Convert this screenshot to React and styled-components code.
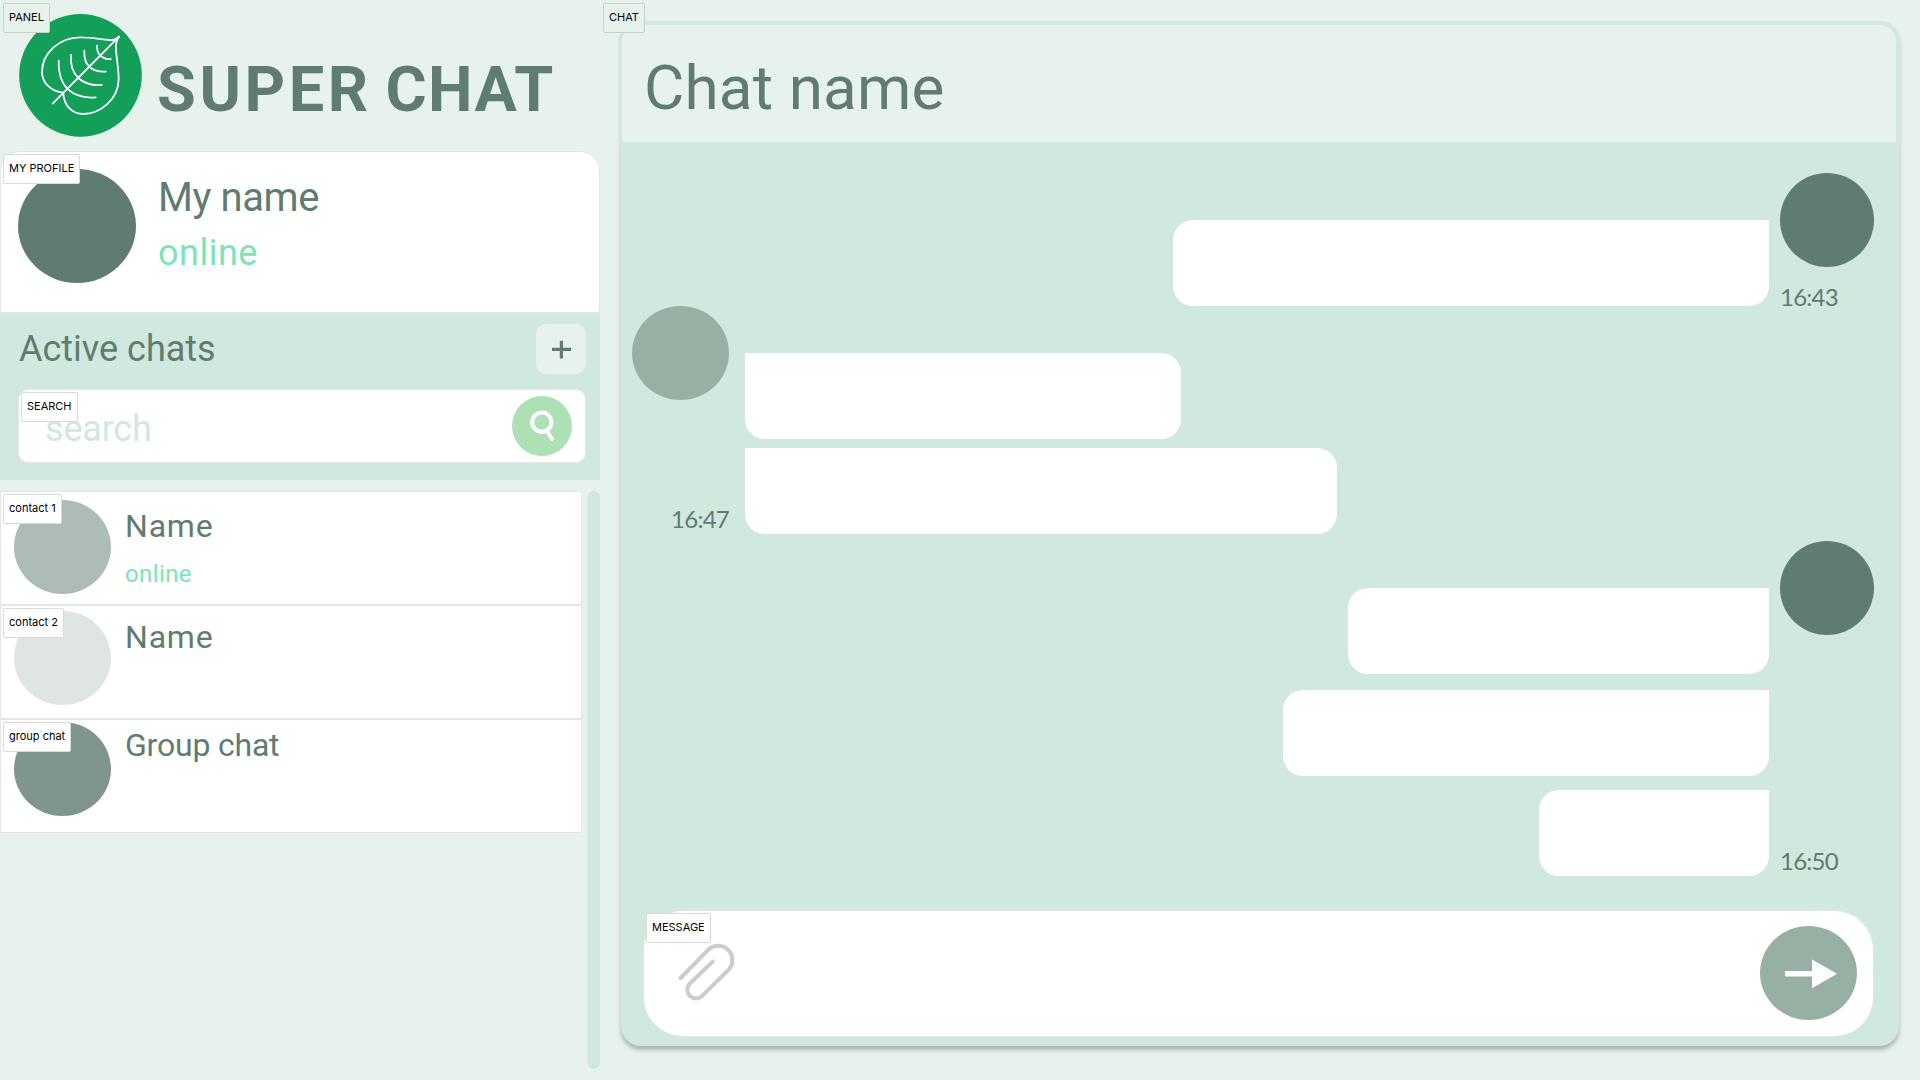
import React from 'react';
import styled, { createGlobalStyle } from 'styled-components';

const color = {
  page: '#e8f2ec',
  mint: '#d0e8dd',
  dark: '#607c70',
  sage: '#98b0a4',
  online: '#7be5b5',
  line: '#e5e5e5',
};

const GlobalStyle = createGlobalStyle`
  *, *::before, *::after { box-sizing: border-box; }
  body { margin: 0; background: ${color.page}; font-family: Roboto, sans-serif; color: ${color.dark}; overflow: hidden; }
  h1, h2, h3, p { margin: 0; font-weight: 400; }
  button { border: 0; padding: 0; cursor: pointer; }
  svg { display: block; }
`;

const Page = styled.main`
  display: flex;
  width: 1920px;
  height: 1080px;
  background: ${color.page};
`;

const Tag = styled.span`
  position: absolute;
  top: ${(p) => 3 - (p.$inset || 0)}px;
  left: ${(p) => 3 - (p.$inset || 0)}px;
  z-index: 2;
  height: 30px;
  padding: 6px 5px 0;
  border: 1px solid ${(p) => (p.$plain ? '#c6cfca' : '#d9d9d9')};
  border-radius: 2px;
  background: ${(p) => (p.$plain ? color.page : '#fff')};
  font: 400 11px/15px Inter, sans-serif;
  color: #000;
  white-space: nowrap;
`;

const Avatar = styled.div`
  flex: none;
  width: ${(p) => p.$w}px;
  height: ${(p) => p.$h}px;
  border-radius: 50%;
  background: ${(p) => p.$color};
`;

/* ---------- left panel ---------- */

const Panel = styled.aside`
  position: relative;
  display: flex;
  flex-direction: column;
  width: 600px;
`;

const Brand = styled.header`
  display: flex;
  align-items: flex-start;
  gap: 15px;
  height: 151px;
  padding: 14px 0 0 19px;
`;

const BrandName = styled.h1`
  margin-top: 43.5px;
  font-size: 63px;
  line-height: 64px;
  font-weight: 700;
  letter-spacing: 1.3px;
  word-spacing: -3.1px;
  white-space: nowrap;
`;

const BrandLead = styled.span`
  letter-spacing: 3.6px;
`;

const Profile = styled.section`
  position: relative;
  display: flex;
  gap: 22px;
  height: 162px;
  padding: 17px;
  border: 1px solid ${color.line};
  border-radius: 20px 20px 0 0;
  background: #fff;
`;

const ProfileText = styled.div`
  padding-top: 5px;
`;

const ProfileName = styled.h2`
  font-size: 40px;
  line-height: 48px;
  letter-spacing: -0.4px;
`;

const ProfileStatus = styled.p`
  margin-top: 9px;
  font-size: 36px;
  line-height: 44px;
  letter-spacing: 0.5px;
  color: ${color.online};
`;

const ActiveChats = styled.section`
  height: 167px;
  padding: 11px 14px 0 18px;
  background: ${color.mint};
`;

const ActiveHead = styled.div`
  display: flex;
  align-items: center;
  justify-content: space-between;
  height: 50px;
`;

const ActiveTitle = styled.h2`
  padding: 0 0 1px 1px;
  font-size: 36px;
  line-height: 44px;
`;

const AddButton = styled.button`
  width: 50px;
  height: 50px;
  border-radius: 10px;
  background: ${color.page};
`;

const SearchBox = styled.div`
  position: relative;
  display: flex;
  align-items: center;
  justify-content: space-between;
  height: 74px;
  margin-top: 15px;
  padding: 0 13px 0 26px;
  border: 1px solid ${color.line};
  border-radius: 10px;
  background: #fff;
`;

const SearchHint = styled.span`
  padding-top: 5px;
  font-size: 36px;
  line-height: 44px;
  letter-spacing: -0.2px;
  color: ${color.mint};
`;

const SearchButton = styled.button`
  width: 60px;
  height: 60px;
  border-radius: 50%;
  background: #aee0b6;
`;

const ContactArea = styled.div`
  display: flex;
  justify-content: space-between;
  align-items: flex-start;
  margin-top: 11px;
`;

const ContactList = styled.div`
  width: 582px;
`;

const Contact = styled.article`
  position: relative;
  display: flex;
  gap: 14px;
  height: 114px;
  padding: ${(p) => p.$top}px 0 0 13px;
  border: 1px solid ${color.line};
  background: #fff;
`;

const ContactText = styled.div`
  padding-top: ${(p) => p.$top}px;
`;

const ContactName = styled.h3`
  font-size: 32px;
  line-height: 38px;
  letter-spacing: ${(p) => p.$track}px;
`;

const ContactStatus = styled.p`
  margin-top: 15px;
  font-size: 24px;
  line-height: 28px;
  letter-spacing: 0.4px;
  color: ${color.online};
`;

const Scrollbar = styled.div`
  width: 13px;
  height: 578px;
  border-radius: 6.5px;
  background: ${color.mint};
`;

/* ---------- chat ---------- */

const ChatArea = styled.section`
  position: relative;
  width: 1320px;
  padding: 21px 21px 34px;
`;

const ChatCard = styled.div`
  display: flex;
  flex-direction: column;
  height: 1025px;
  border-radius: 20px;
  background: ${color.mint};
  box-shadow: 0 4px 4px rgba(0, 0, 0, 0.25);
`;

const ChatHeader = styled.header`
  flex: none;
  height: 125px;
  margin: 0 -1px 0 -2px;
  padding: 31px 0 0 22px;
  border: solid ${color.mint};
  border-width: 4px 4px 4px 3px;
  border-radius: 20px 20px 0 0;
  background: ${color.page};
`;

const ChatName = styled.h2`
  font-size: 62px;
  line-height: 64px;
  letter-spacing: 0.15px;
`;

const Messages = styled.div`
  display: flex;
  flex-direction: column;
  height: 764px;
  padding: 27px 25px 0 11px;
`;

const Group = styled.div`
  display: flex;
  flex-direction: ${(p) => (p.$mine ? 'row-reverse' : 'row')};
  gap: ${(p) => (p.$mine ? 11 : 16)}px;
  margin-top: ${(p) => p.$gap || 0}px;
`;

const Side = styled.div`
  display: flex;
  flex-direction: column;
  justify-content: space-between;
  align-items: ${(p) => (p.$mine ? 'flex-start' : 'flex-end')};
  width: ${(p) => (p.$mine ? 94 : 97)}px;
  padding-bottom: ${(p) => p.$bottom}px;
`;

const Time = styled.time`
  font: 400 24px/18px Lato, sans-serif;
  letter-spacing: -0.75px;
`;

const Stack = styled.div`
  display: flex;
  flex-direction: column;
  align-items: ${(p) => (p.$mine ? 'flex-end' : 'flex-start')};
  padding-top: 47px;
`;

const Bubble = styled.div`
  width: ${(p) => p.$w}px;
  height: 86px;
  margin-top: ${(p) => p.$gap || 0}px;
  border-radius: ${(p) => (p.$mine ? '20px 0 20px 20px' : '0 20px 20px 20px')};
  background: #fff;
`;

const Composer = styled.div`
  position: relative;
  display: flex;
  align-items: flex-start;
  justify-content: space-between;
  height: 127px;
  margin: 0 25px 0 22px;
  padding: 15px 16px 0 34px;
  border: 1px solid ${color.line};
  border-radius: 40px;
  background: #fff;
`;

const AttachButton = styled.button`
  margin-top: 16px;
  background: none;
`;

const SendButton = styled.button`
  width: 97px;
  height: 94px;
  border-radius: 50%;
  background: ${color.sage};
`;

const LeafLogo = () => (
  <svg width="123" height="123" viewBox="57 42 369 369" fill="none">
    <circle cx="241.5" cy="226" r="184" fill="#139e59" />
    <g stroke="#fff" strokeWidth="5.4" strokeLinecap="round" strokeLinejoin="round">
      <path d="M158 311 L357 110" />
      <path d="M357 110 C350 119 341 121 329 120 C300 118 275 112 240 112 C178 112 126 160 126 216 C126 250 155 275 190 278" />
      <path d="M357 110 C349 120 347 132 348 148 C350 182 356 205 356 238 C356 298 300 342 250 342 C215 342 192 316 190 281" />
      <path d="M291 137 C291 150 295 161 301 167 C308 174 320 178 332 177" />
      <path d="M253 152 C252 175 257 190 268 200 C280 212 298 216 317 215" />
      <path d="M213 164 C211 195 220 220 235 234 C252 250 278 257 305 255" />
      <path d="M176 182 C174 215 184 248 202 266 C222 286 252 295 287 292" />
    </g>
  </svg>
);

const PlusIcon = () => (
  <svg width="50" height="50" viewBox="0 0 50 50" stroke={color.dark} strokeWidth="3.2">
    <path d="M16 25.3H35M25.4 16.8V34.5" />
  </svg>
);

const SearchIcon = () => (
  <svg width="60" height="60" viewBox="0 0 60 60" fill="none" stroke="#fff" strokeWidth="4">
    <circle cx="29.8" cy="26.2" r="9.6" />
    <path d="M35.5 36 L40 43" strokeLinecap="round" />
  </svg>
);

const ClipIcon = () => (
  <svg width="59" height="60" viewBox="355 189 177 180" fill="none" stroke="#ccc" strokeWidth="12" strokeLinecap="round">
    <path d="M363 297 L448 210 A43 43 0 0 1 508.5 270.5 L427.4 350.4 A26 26 0 0 1 390.6 313.6 L459 248" />
  </svg>
);

const SendIcon = () => (
  <svg width="97" height="94" viewBox="0 0 97 94" fill="#fff">
    <path d="M25 45H52V33.5L77 47.8L52 62.3V50.5H25Z" />
  </svg>
);

const contacts = [
  { tag: 'contact 1', name: 'Name', status: 'online', avatar: '#adbcb5', top: 8, textTop: 7, track: 0.8 },
  { tag: 'contact 2', name: 'Name', avatar: '#dee5e2', top: 5, textTop: 7, track: 0.8 },
  { tag: 'group chat', name: 'Group chat', avatar: '#80958b', top: 2, textTop: 4, track: -0.2 },
];

const groups = [
  { mine: true, time: '16:43', gap: 0, bottom: 0, bubbles: [{ w: 596 }] },
  { mine: false, time: '16:47', gap: 0, bottom: 6, bubbles: [{ w: 436 }, { w: 592, gap: 9 }] },
  { mine: true, time: '16:50', gap: 7, bottom: 6, bubbles: [{ w: 421 }, { w: 486, gap: 16 }, { w: 230, gap: 14 }] },
];

export default function App() {
  return (
    <Page>
      <GlobalStyle />
      <Panel>
        <Tag $plain>PANEL</Tag>
        <Brand>
          <LeafLogo />
          <BrandName><BrandLead>SUPER</BrandLead> CHAT</BrandName>
        </Brand>
        <Profile>
          <Tag $inset={1}>MY PROFILE</Tag>
          <Avatar $w={118} $h={114} $color={color.dark} />
          <ProfileText>
            <ProfileName>My name</ProfileName>
            <ProfileStatus>online</ProfileStatus>
          </ProfileText>
        </Profile>
        <ActiveChats>
          <ActiveHead>
            <ActiveTitle>Active chats</ActiveTitle>
            <AddButton aria-label="Add chat"><PlusIcon /></AddButton>
          </ActiveHead>
          <SearchBox>
            <Tag $inset={1}>SEARCH</Tag>
            <SearchHint>search</SearchHint>
            <SearchButton aria-label="Search"><SearchIcon /></SearchButton>
          </SearchBox>
        </ActiveChats>
        <ContactArea>
          <ContactList>
            {contacts.map((c) => (
              <Contact key={c.tag} $top={c.top}>
                <Tag $inset={1}>{c.tag}</Tag>
                <Avatar $w={97} $h={94} $color={c.avatar} />
                <ContactText $top={c.textTop}>
                  <ContactName $track={c.track}>{c.name}</ContactName>
                  {c.status && <ContactStatus>{c.status}</ContactStatus>}
                </ContactText>
              </Contact>
            ))}
          </ContactList>
          <Scrollbar />
        </ContactArea>
      </Panel>
      <ChatArea>
        <Tag $plain>CHAT</Tag>
        <ChatCard>
          <ChatHeader>
            <ChatName>Chat name</ChatName>
          </ChatHeader>
          <Messages>
            {groups.map((g) => (
              <Group key={g.time} $mine={g.mine} $gap={g.gap}>
                <Side $mine={g.mine} $bottom={g.bottom}>
                  <Avatar $w={g.mine ? 94 : 97} $h={94} $color={g.mine ? color.dark : color.sage} />
                  <Time>{g.time}</Time>
                </Side>
                <Stack $mine={g.mine}>
                  {g.bubbles.map((b) => (
                    <Bubble key={b.w} $mine={g.mine} $w={b.w} $gap={b.gap} />
                  ))}
                </Stack>
              </Group>
            ))}
          </Messages>
          <Composer>
            <Tag $inset={1}>MESSAGE</Tag>
            <AttachButton aria-label="Attach file"><ClipIcon /></AttachButton>
            <SendButton aria-label="Send"><SendIcon /></SendButton>
          </Composer>
        </ChatCard>
      </ChatArea>
    </Page>
  );
}
